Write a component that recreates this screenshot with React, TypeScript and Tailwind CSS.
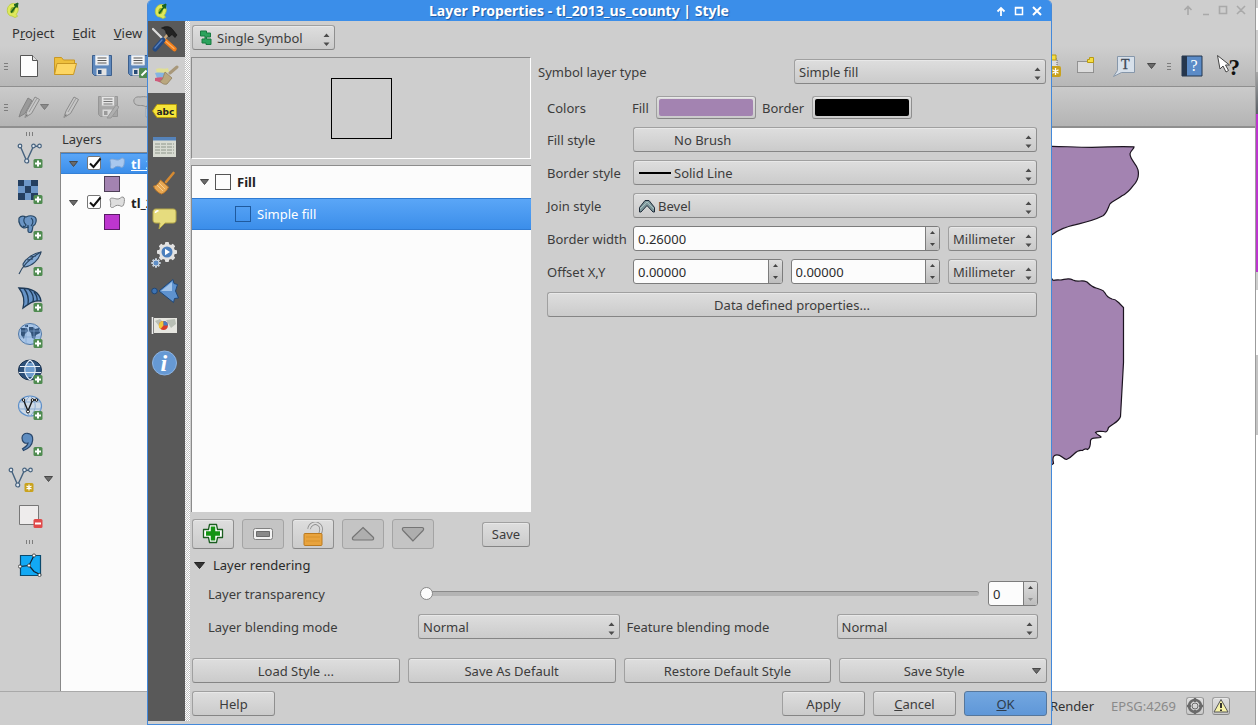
import React, { useState } from 'react';

const BTN =
  'rounded-[3px] border border-[#a0a0a0] border-b-[#858585] border-r-[#8f8f8f] bg-linear-to-b from-[#dedede] to-[#cbcbcb] shadow-[inset_0_1px_0_#e8e8e8] text-[#3c3c3c]';

/* ---------- small shared pieces ---------- */

const Down: React.FC<{ className?: string }> = ({ className = 'w-[9px] h-[6px]' }) => (
  <svg viewBox="0 0 9 6" className={`shrink-0 ${className}`}>
    <path d="M.5.5h8L4.5 5.5z" fill="#6a6a6a" stroke="#484848" />
  </svg>
);

const Grip: React.FC<{ vertical?: boolean }> = ({ vertical }) => (
  <svg viewBox="0 0 8 8" className={`w-2 h-2 shrink-0 ${vertical ? 'rotate-90' : ''}`}>
    <path d="M2 1.5h4M2 4.5h4M2 7.5h4" stroke="#7d7d7d" />
  </svg>
);

interface ComboProps {
  label: string;
  value: string;
  options?: string[];
  className?: string;
  pad?: string;
  icon?: React.ReactNode;
}

const Combo: React.FC<ComboProps> = ({ label, value, options = [], className = '', pad = 'pl-1', icon }) => (
  <div className={`relative ${className}`}>
    <select aria-label={label} defaultValue={value} className={`${BTN} appearance-none block w-full h-[25px] pr-5 outline-none ${pad}`}>
      {[value, ...options].map(o => <option key={o}>{o}</option>)}
    </select>
    {icon && <span className="absolute left-[6px] inset-y-0 flex items-center pointer-events-none">{icon}</span>}
    <svg viewBox="0 0 7 13" className="absolute right-[5px] top-[8px] w-[7px] h-[13px] pointer-events-none">
      <path d="M.5 4 3.5.5 6.5 4zM.5 9.5 3.5 13 6.5 9.5z" fill="#4c4c4c" />
    </svg>
  </div>
);

interface SpinProps {
  label: string;
  value: string;
  onChange: (v: string) => void;
  step: number;
  digits: number;
  className?: string;
}

const Spin: React.FC<SpinProps> = ({ label, value, onChange, step, digits, className = '' }) => {
  const bump = (d: number) => onChange(Math.max(0, Number(value) + d).toFixed(digits));
  return (
    <div className={`flex h-[25px] rounded-[3px] border border-[#7c7c7c] bg-[#fcfcfc] overflow-hidden ${className}`}>
      <input
        type="text"
        aria-label={label}
        value={value}
        onChange={e => onChange(e.target.value)}
        className="flex-1 min-w-0 pl-1 bg-transparent text-[#2c2c2c] outline-none"
      />
      <div className="w-[14px] shrink-0 flex flex-col border-l border-[#7c7c7c] bg-linear-to-b from-[#dedede] to-[#bdbdbd]">
        <button aria-label={`${label} up`} onClick={() => bump(step)} className="flex-1 flex items-center justify-center">
          <svg viewBox="0 0 5 3" className="w-[5px] h-[3px]"><path d="M0 3 2.5 0 5 3z" fill="#444" /></svg>
        </button>
        <button
          aria-label={`${label} down`}
          onClick={() => bump(-step)}
          disabled={digits === 0 && value === '0'}
          className="flex-1 flex items-center justify-center disabled:opacity-40"
        >
          <svg viewBox="0 0 5 3" className="w-[5px] h-[3px]"><path d="M0 0 2.5 3 5 0z" fill="#444" /></svg>
        </button>
      </div>
    </div>
  );
};

const Logo = () => (
  <svg viewBox="0 0 14 16" className="w-[14px] h-4 shrink-0">
    <path d="M7.5 1.5C4 1.5 1.3 4.500 1.300 8.500c0 3.500 2 5.500 4.700 5.500l3 1.500 2.500-1.200-1.300-2c1.800-2 2.600-5 1.700-7.500C11.200 2.700 9.700 1.500 7.500 1.500z" fill="#dfe95c" stroke="#b5c93a" strokeWidth=".8" />
    <path d="M6.500 5C5 5.500 4.200 7 4.300 9.300c.1 1.500 1 2.200 1.900 2C8 11 9 9 8.900 6.800 8.700 5.200 7.800 4.700 6.500 5z" fill="#8fb02a" />
    <path d="M5 10.500 10 4" stroke="#17621f" strokeWidth="1.600" />
    <path d="M8 2.800 12 1 11.300 5.500z" fill="#17621f" stroke="#17621f" />
  </svg>
);

const PlusBadge = () => (
  <g>
    <rect x="16.500" y="17" width="9" height="9" rx="1.500" fill="#4f8b50" />
    <path d="M21 18.500v6M18 21.500h6" stroke="#fff" strokeWidth="2" />
  </g>
);

const vee = (c: string) => (
  <g fill="none" stroke={c} strokeWidth="1.400">
    <path d="M3.300 4.300 9.700 19 16.500 4.300h6.200" />
    <g fill="#dfe6ee" strokeWidth="1.200">
      <circle cx="3" cy="4" r="1.800" /><circle cx="9.700" cy="19" r="2" />
      <circle cx="16.500" cy="4" r="1.800" /><circle cx="22.500" cy="4" r="1.800" />
    </g>
  </g>
);

/* ---------- main window icons ---------- */

const DATA_ICONS: { name: string; art: React.ReactNode }[] = [
  { name: 'Add vector layer', art: vee('#46627e') },
  {
    name: 'Add raster layer',
    art: (
      <g>
        <rect x="1" y="2" width="20" height="20" fill="#6d97c8" />
        <path d="M1 2h6v6H1zM14 2h7v6h-7zM8 8h6v7H8zM1 15h7v7H1zM14 15h7v7h-7z" fill="#243f60" />
      </g>
    ),
  },
  {
    name: 'Add PostGIS layer',
    art: (
      <g fill="#6b95c4" stroke="#274766" strokeWidth="1.200">
        <path d="M2 4C4 1.500 7 2 9 3c3-1.500 6-1.500 8-.5 2 .8 2.500 3 2 5.500-.4 2-1.500 3.500-3 4l-1 5c-.5 2-4 2-4 0v-4l-3 1C4 14 1 9 2 4z" />
        <path d="M8 3C6 6 7 9 9 11c-1 2-2 2-3 1M14 4c3 2 2 6 0 8M11 11v3" fill="none" />
      </g>
    ),
  },
  {
    name: 'Add SpatiaLite layer',
    art: (
      <g stroke="#2c4763" strokeWidth="1.100" fill="#86acd6">
        <path d="M24 2C17 3 9 8 6 14c0 2 1 3 2 3 7-1 14-7 16-15z" />
        <path d="M24 2C15 7 7 13 2 24M10 10l6-1M13 7l6-1" fill="none" />
      </g>
    ),
  },
  {
    name: 'Add MSSQL layer',
    art: (
      <g stroke="#1e3a58" strokeWidth="1.300" fill="#6693c6">
        <path d="M2 2c8 0 20 1 22 13-7-1-11 2-18 7C8 14 6 7 2 2z" />
        <path d="M7 2.500c4 5 5 10 4 16M12 3.500c4 4 5 8 4 12.500M17 6c2.500 3 3.500 6 3 9" fill="none" />
      </g>
    ),
  },
  {
    name: 'Add WMS layer',
    art: (
      <g>
        <ellipse cx="13" cy="12" rx="11.500" ry="10.500" fill="#a9c6e8" stroke="#4f77a5" />
        <path d="M4 6h6l1 3-3 3-1 5-3-4zM12 5h4l2 2 4-1 1 5-4 2-1 4-3-1-1-5-2-2zM8 3h3v2H8z" fill="#33547a" />
        <path d="M2 9h22M2 15h22M9 2v20M17 2v20" stroke="#7fa5d0" strokeWidth=".7" />
      </g>
    ),
  },
  {
    name: 'Add WCS layer',
    art: (
      <g>
        <ellipse cx="13" cy="12" rx="11.500" ry="10" fill="#2d5079" stroke="#172f4c" />
        <path d="M9 5h8v3H9zM8 9h10v5H8zM9 15h8v4H9z" fill="#6e9ccd" />
        <path d="M3 8.500h20M2 14.500h22M13 2c-7 6-7 14 0 20M13 2c7 6 7 14 0 20" fill="none" stroke="#e6eef7" strokeWidth="1.100" />
      </g>
    ),
  },
  {
    name: 'Add WFS layer',
    art: (
      <g>
        <ellipse cx="13" cy="12" rx="11.500" ry="10" fill="#cfdae6" stroke="#5d8fc9" strokeWidth="1.200" />
        <path d="M3 8h20M2 15h22M13 2c-7 6-7 14 0 20M13 2c7 6 7 14 0 20" fill="none" stroke="#8badd4" />
        <path d="M6.500 6 11 17l4.500-11H20" fill="none" stroke="#1b1b1b" strokeWidth="1.400" />
        <g fill="#fff" stroke="#111"><circle cx="6.500" cy="6" r="1.300" /><circle cx="11" cy="17.500" r="1.500" /><circle cx="15.500" cy="6" r="1.300" /><circle cx="19.500" cy="6" r="1.300" /></g>
      </g>
    ),
  },
  {
    name: 'Add delimited text layer',
    art: <path d="M5 8c0-3 2.500-5 5.500-4.700C14 3.600 16 6 15.700 10c-.4 5-4 8.500-9.200 10.500l-1-1.700c3-1.700 5-3.500 5.500-5.800C7.500 14 5 11.500 5 8z" fill="#5f8dc0" stroke="#29466a" strokeWidth="1.200" />,
  },
];

const Floppy: React.FC<{ gray?: boolean; children?: React.ReactNode }> = ({ gray, children }) => (
  <svg viewBox="0 0 22 24" className="w-[22px] h-6 shrink-0">
    <path d="M1.500 1.500h19v20h-17l-2-2z" fill={gray ? '#9d9d9d' : '#5f89bd'} stroke={gray ? '#858585' : '#3c5f8d'} />
    <path d="M4.500 1.500h13v9.500h-13z" fill="#f4f4f4" stroke={gray ? '#aaa' : '#c9d6e6'} />
    <path d="M6.500 4h9M6.500 6.500h9M6.500 9h9" stroke="#555" />
    <path d="M5.500 14.500h10v7h-10z" fill="#e3e3e3" />
    <path d="M7 16h3.500v4H7z" fill={gray ? '#8c8c8c' : '#294c78'} />
    {children}
  </svg>
);

const Pencil: React.FC<{ className?: string; children?: React.ReactNode }> = ({ className = 'w-[18px]', children }) => (
  <svg viewBox="0 0 18 24" className={`h-6 shrink-0 overflow-visible ${className}`}>
    {children}
    <path d="M2 22.500 4 16 12 2l4.500 2.500L8.500 18.500z" fill="#c6c6c6" stroke="#8a8a8a" />
    <path d="M2 22.500 2.800 19l2.500 1.400zM6 17 14 3.300" fill="#777" stroke="#9a9a9a" />
  </svg>
);

const Cloud: React.FC<{ sel?: boolean }> = ({ sel }) => (
  <svg viewBox="0 0 16 13" className="w-4 h-[13px] shrink-0 ml-px">
    <path d="M1 3.500C1.500 1 5 2.500 8 3s4-2.500 6-2 1.500 4 1 6.500-2 3.500-3.500 2.500S7 9 5.500 10.500 1 12 1.500 9.500 1.500 6 1 3.500z" fill={sel ? '#a9c8ee' : '#dedede'} stroke={sel ? '#7fa5d4' : '#8e8e8e'} />
  </svg>
);

/* ---------- dialog side tabs ---------- */

const gearTeeth = Array.from({ length: 8 }, (_, i) => i * 45);

const TABS: { name: string; art: React.ReactNode }[] = [
  {
    name: 'General',
    art: (
      <g strokeLinecap="round">
        <path d="M2 4 16 18" stroke="#dcdcdc" strokeWidth="2.200" />
        <path d="M14.500 16l9 8" stroke="#f07d1a" strokeWidth="4.500" />
        <path d="M15 16.500l8 7" stroke="#ffb061" strokeWidth="1.200" />
        <path d="M17 9 13 14" stroke="#c9a77c" strokeWidth="2.500" />
        <path d="M12 15 4 24" stroke="#244a83" strokeWidth="5" />
        <path d="M11 15 4 23" stroke="#557fbc" strokeWidth="1.300" />
        <path d="M11 3c4-2.500 9-1.500 11 2l4 5-2 2.500-3-3-3 2.500-3-4c0-3-2-4-4-5z" fill="#232323" stroke="#111" strokeWidth=".6" />
      </g>
    ),
  },
  {
    name: 'Style',
    art: (
      <g>
        <path d="M5 8c4-2 8 1 12-1l1 4-12 2z" fill="#e0df94" />
        <path d="M4 12c5-1 8 0 12 0l-1 4-9 1z" fill="#86b4e2" />
        <path d="M4 17c4-1 8-1 12 0l-2 5c-4 1-7-2-10-2z" fill="#cf5b7b" />
        <path d="M26 6 19 12" stroke="#a8987a" strokeWidth="3" strokeLinecap="round" />
        <path d="M14 11l7 6-5 6c-3 1-6-1-7-3 3-1 3-4 5-9z" fill="#b9a77e" stroke="#8f8060" strokeWidth=".8" />
      </g>
    ),
  },
  {
    name: 'Labels',
    art: (
      <g>
        <path d="M1.500 14 6 7.500h19.500v13H6z" fill="#f6e53a" stroke="#b69b10" />
        <text x="5.500" y="17.500" fontFamily="'DejaVu Sans', sans-serif" fontWeight="bold" fontSize="9" fill="#222">abc</text>
      </g>
    ),
  },
  {
    name: 'Fields',
    art: (
      <g>
        <rect x="2" y="4" width="23" height="20" fill="#d8dbd2" />
        <path d="M2 4h23v3.500H2z" fill="#5583ba" />
        <path d="M4 11h19M4 14h19M4 17h19M4 20h19" stroke="#8e968a" strokeDasharray="5 1" />
      </g>
    ),
  },
  {
    name: 'Rendering',
    art: (
      <g>
        <path d="M22.500 4 15 13" stroke="#d58a32" strokeWidth="2.600" strokeLinecap="round" />
        <path d="M9.500 11l8 7c-1 3-4 6-7 7-3-1-7-4-8-8 3 0 5-3 7-6z" fill="#e8a853" stroke="#b9762a" />
        <path d="M6 16l6 6M8 14l6 6" stroke="#f6cf93" />
      </g>
    ),
  },
  {
    name: 'Display',
    art: (
      <g>
        <path d="M5 4h17c2 0 3 1 3 3v8c0 2-1 3-3 3h-8l-6 6 1-6H5c-2 0-3-1-3-3V7c0-2 1-3 3-3z" fill="#e6dc7e" stroke="#b5a848" />
        <path d="M4.500 8c0-2 1-2 3-2.200" fill="none" stroke="#fff" strokeWidth="1.500" />
      </g>
    ),
  },
  {
    name: 'Actions',
    art: (
      <g>
        {gearTeeth.map(a => (
          <rect key={a} x="14" y="1" width="4" height="5" rx="1" fill="#e2e2e2" transform={`rotate(${a} 16 11)`} />
        ))}
        <circle cx="16" cy="11" r="8" fill="#e2e2e2" />
        <circle cx="16" cy="11" r="5.500" fill="#4b7fbd" />
        <path d="M14 7.800v6.400l5-3.200z" fill="#fff" />
        {gearTeeth.map(a => (
          <rect key={a} x="4" y="17.300" width="2" height="3" fill="#c9d4e0" transform={`rotate(${a} 5 22)`} />
        ))}
        <circle cx="5" cy="22" r="3" fill="#5f8fc8" stroke="#d0d8e0" />
      </g>
    ),
  },
  {
    name: 'Joins',
    art: (
      <g>
        <path d="M8 14 22 2.500l1 4 3.500 1-2 6.500 3 7-4 .5-1 4z" fill="#5e92cf" stroke="#1f4778" />
        <path d="M10 14 21 5v9z" fill="#a2c4ea" />
        <circle cx="3.500" cy="14" r="2.800" fill="#3d73b4" stroke="#1f4778" />
      </g>
    ),
  },
  {
    name: 'Diagrams',
    art: (
      <g>
        <path d="M1.500 4v17" stroke="#ededed" strokeWidth="1.600" />
        <rect x="3" y="5" width="23" height="15" fill="#e6e6e0" />
        <path d="M4 8l5-2 3 3-4 4zM15 7l9-1 1 5-5 4z" fill="#b9bfb5" />
        <circle cx="12.500" cy="12.500" r="4.500" fill="#d93d2a" />
        <path d="M12.500 12.500V8a4.500 4.500 0 0 0-3 8z" fill="#f0c63a" />
        <path d="M12.500 12.500V8a4.500 4.500 0 0 1 4.500 4.500z" fill="#4a7dc0" />
      </g>
    ),
  },
  {
    name: 'Metadata',
    art: (
      <g>
        <circle cx="13.500" cy="14" r="12" fill="#6699d4" stroke="#8eb4e2" />
        <text x="9.500" y="22" fontFamily="'Liberation Serif', serif" fontStyle="italic" fontWeight="bold" fontSize="24" fill="#fff">i</text>
      </g>
    ),
  },
];

/* ---------- main window ---------- */

const MapCanvas = () => (
  <svg viewBox="1035 128 220 563" className="w-[220px] h-[563px] shrink-0">
    <g fill="#a383b1" stroke="#1c1420" strokeWidth="1.200">
      <path d="M1030 146l22 .3c14 .3 26 1 40 1 14-.5 28-.7 42-.5.5 2-3 3-4 7 0 6 6 9 8 16 1.500 7-1 12-5 16-3 4-7 8-11 10-5 4-9 5-12 8-2 4-3 9-7 12-6 3-15 6-24 8-10 2-20 5-27 11l-22 10z" />
      <path d="M1030 281l22-2c1 3 3 0 8 1 4 0 8-3 13 0 6 3 8-1 14 2 3 3 5 5 9 6 5 2 7 1 9 5 2 4 4 5 7 6 4 0 5 2 8 5l3.500 3.500v55c-1 18-2 36-3 54-2 6-8 7-12 11-1 4-2 5-5 4-4 0-6-1-8 1 2 3 7 4 5 5-4 1-9-1-10 3 0 4 0 8-3 9-2-2-3 0-5 1-5-1-7 2-9 4-3 3-4 4-7 5-4-1-7-7-12-4-3 2-1 6-1 8l-3 2-22-4z" />
    </g>
  </svg>
);

const LayerRow: React.FC<{ sel?: boolean }> = ({ sel }) => (
  <label
    className={`flex items-center pl-2 gap-[6px] font-bold ${sel ? 'h-[21px] bg-linear-to-b from-[#5aa6f7] to-[#3b8eea] border-t border-b border-[#3581d6] text-white' : 'h-[19px] text-[#222]'}`}
  >
    <Down />
    <span className="relative ml-[3px] w-[15px] h-[15px] shrink-0">
      <input type="checkbox" defaultChecked className="peer appearance-none block w-[14px] h-[14px] rounded-[2px] border border-[#777] bg-white" />
      <svg viewBox="0 0 15 15" className="absolute inset-0 hidden peer-checked:block pointer-events-none">
        <path d="M3 7.500 6.500 11 13.500 2.500" fill="none" stroke="#111" strokeWidth="2" />
      </svg>
    </span>
    <Cloud sel={sel} />
    <span className={`truncate ${sel ? 'underline' : ''}`}>tl_2013_us_county</span>
  </label>
);

const MainWindow = () => (
  <div className="flex-1 min-w-0 flex flex-col bg-[#cecece]">
    <header className="h-[22px] flex items-center justify-between pl-[6px] pr-2 pb-[2px]">
      <Logo />
      <svg viewBox="0 0 64 12" className="w-16 h-3" fill="none" stroke="#a9a9a9" strokeWidth="1.600">
        <path d="M5 11V3M1.500 6 5 2.500 8.500 6M20 10.500h6M36.500 2.500h7v7h-7zM54 2l8 8M62 2l-8 8" />
      </svg>
    </header>
    <nav className="h-6 flex items-center gap-[18px] pl-3 pb-[2px] text-[13px] text-[#333]">
      <button>P<u>r</u>oject</button>
      <button><u>E</u>dit</button>
      <button><u>V</u>iew</button>
    </nav>

    <div className="h-[41px] flex items-center justify-between border-b border-[#8f8f8f] bg-linear-to-b from-[#cecece] to-[#b7b7b7]">
      <div className="flex items-center gap-[14px] pl-[2px]">
        <Grip />
        <svg viewBox="0 0 20 24" className="w-5 h-6 -ml-[5px]">
          <path d="M1.500 1.500h12l5 5v16h-17z" fill="#fdfdfd" stroke="#555" />
          <path d="M13.500 1.500v5h5" fill="#ddd" stroke="#555" />
        </svg>
        <svg viewBox="0 0 24 24" className="w-6 h-6">
          <path d="M1.500 20.500v-17h7l2 2.500h11v4" fill="#eebf3c" stroke="#c89724" />
          <path d="M1.500 20.500 4 9.500h19.500l-3 11z" fill="#fdd663" stroke="#c89724" />
        </svg>
        <Floppy />
        <Floppy>
          <rect x="12" y="14" width="10" height="10" rx="1" fill="#4f8b50" />
          <path d="M14.500 21.500l5-5" stroke="#fff" strokeWidth="2" />
        </Floppy>
      </div>
      <div className="flex items-center pr-[14px]">
        <svg viewBox="0 0 24 24" className="w-6 h-6">
          <path d="M1 5h17v12H1z" fill="#dcdcdc" stroke="#666" strokeDasharray="1 1" />
          <path d="M11 1h6v5h-6z" fill="#f5dd43" stroke="#b89a12" />
          <rect x="11" y="12" width="11" height="11" rx="2" fill="#c9a21d" />
          <path d="M16.500 14v7M13.500 15.700l6 3.600M19.500 15.700l-6 3.600" stroke="#fff" strokeWidth="1.300" />
        </svg>
        <svg viewBox="0 0 20 18" className="w-5 h-[18px] ml-[13px]">
          <path d="M1.500 4.500h16v11h-16z" fill="#dcdcdc" stroke="#555" strokeDasharray="1 1" />
          <path d="M11.500 5.500v-3h2v-2h4v5z" fill="#f5dd43" stroke="#b89a12" />
        </svg>
        <svg viewBox="0 0 24 22" className="w-6 h-[22px] ml-[16px]">
          <path d="M5.500 1.500h17v16h-13l-8 4 4-6z" fill="#d7e0ea" stroke="#8697aa" />
          <text x="9" y="14" fontFamily="'Liberation Serif', serif" fontSize="14" fill="#3c4652" stroke="#3c4652" strokeWidth=".3">T</text>
        </svg>
        <Down className="w-[9px] h-[6px] ml-[11px]" />
        <span className="ml-[9px] flex"><Grip /></span>
        <svg viewBox="0 0 22 22" className="w-[22px] h-[22px] ml-2">
          <path d="M1 1h20v20H1z" fill="#5b8bc7" stroke="#24364f" />
          <path d="M1 1h5v20H1z" fill="#26374e" />
          <text x="9.500" y="16" fontFamily="'Liberation Serif', serif" fontSize="16" fill="#fff">?</text>
        </svg>
        <svg viewBox="0 0 26 26" className="w-[26px] h-[26px] ml-3">
          <path d="M2.500 2.500 5 16l3-3 3 6 2.500-1.500L10.500 12h4z" fill="#fff" stroke="#444" />
          <text x="13.500" y="22" fontFamily="'Liberation Serif', serif" fontSize="23" fontWeight="bold" fill="#111">?</text>
        </svg>
      </div>
    </div>

    <div className="h-[41px] flex items-center gap-[13px] pl-[2px] border-b-2 border-[#8f8f8f] bg-linear-to-b from-[#cbcbcb] to-[#b4b4b4]">
      <Grip />
      <Pencil className="w-[18px]">
        <path d="M-4 22-2 16 5 3l4 2.500L2 18.500z" fill="#9a9a9a" stroke="#848484" />
      </Pencil>
      <span className="-ml-[14px] flex opacity-60"><Down /></span>
      <Pencil />
      <span className="ml-1 flex opacity-70">
        <Floppy gray><path d="M10 23l9-13 3 2-8 11z" fill="#aaa" stroke="#888" /></Floppy>
      </span>
      <svg viewBox="0 0 24 24" className="w-6 h-6 shrink-0 opacity-70">
        <path d="M3 9c-3-4 0-8 5-7 5-1 10 0 12 3l-6 7c-4-3-7 0-11-3z" fill="#bdbdbd" stroke="#777" />
        <path d="M14 13h8v9h-8z" fill="#dde3ea" stroke="#8896a6" />
      </svg>
    </div>

    <div className="flex-1 flex min-h-0">
      <div className="w-[60px] shrink-0 flex flex-col items-center">
        <span className="h-[9px] flex items-center pt-[2px]"><Grip vertical /></span>
        {DATA_ICONS.map(i => (
          <button key={i.name} aria-label={i.name} className="h-9 flex items-center">
            <svg viewBox="0 0 26 26" className="w-[26px] h-[26px]">{i.art}<PlusBadge /></svg>
          </button>
        ))}
        <button aria-label="New shapefile layer" className="h-9 flex items-center gap-[10px]">
          <svg viewBox="0 0 26 26" className="w-[26px] h-[26px]">
            {vee('#46627e')}
            <rect x="16.500" y="17" width="9" height="9" rx="1.500" fill="#c9a21d" />
            <path d="M21 18.500v6M18.500 20l5 3M23.500 20l-5 3" stroke="#fff" strokeWidth="1.200" />
          </svg>
          <Down />
        </button>
        <button aria-label="Remove layer" className="h-9 flex items-center">
          <svg viewBox="0 0 26 26" className="w-[26px] h-[26px]">
            <path d="M2.500 3.500h19v19h-19z" fill="#eeecec" stroke="#777" />
            <rect x="16.500" y="17" width="9" height="9" rx="1.500" fill="#e04a4a" />
            <path d="M18 21.500h6" stroke="#fff" strokeWidth="2" />
          </svg>
        </button>
        <span className="h-[18px] flex items-center"><Grip vertical /></span>
        <button aria-label="Topology checker" className="h-7 flex items-center">
          <svg viewBox="0 0 24 24" className="w-6 h-6">
            <path d="M2.500 2.500h20v20h-20z" fill="#12a9f5" stroke="#0b4a6d" strokeWidth="1.200" />
            <path d="M2 13.500l9-1 5-10M11 12.500l5 6 6 3" fill="none" stroke="#123" strokeWidth="1.200" />
            <g fill="#fff" stroke="#333" strokeWidth=".8"><circle cx="2" cy="13.500" r="1.600" /><circle cx="11" cy="12.500" r="1.600" /><circle cx="16" cy="2.500" r="1.600" /><circle cx="21.500" cy="22" r="1.600" /></g>
          </svg>
        </button>
      </div>
      <aside className="w-[240px] shrink-0 flex flex-col text-[13px]">
        <h2 className="h-6 flex items-center pl-[2px] pb-[2px] text-[#333]">Layers</h2>
        <div className="flex-1 border-l border-t border-[#888] bg-[#fcfcfc]">
          <LayerRow sel />
          <div className="h-[19px] flex items-center pl-[43px]"><span className="w-4 h-4 border border-[#4e3f57] bg-[#a383b1]" /></div>
          <LayerRow />
          <div className="h-[19px] flex items-center pl-[43px]"><span className="w-4 h-4 border border-[#5a1b66] bg-[#bd36cf]" /></div>
        </div>
      </aside>
      <main className="flex-1 min-w-0 bg-white flex justify-end overflow-hidden">
        <MapCanvas />
      </main>
    </div>

    <footer className="h-[34px] shrink-0 flex items-center justify-end pr-[25px] pb-[6px] border-t border-[#a9a9a9] text-[13px]">
      <span className="text-[#333]">Render</span>
      <span className="ml-[17px] text-[#8a8a8a]">EPSG:4269</span>
      <button aria-label="CRS status" className={`${BTN} w-[18px] h-[18px] ml-[10px]`}>
        <svg viewBox="0 0 16 16" className="w-4 h-4" fill="none" stroke="#6a6a6a">
          <circle cx="8" cy="8" r="6" strokeWidth="2.500" /><circle cx="8" cy="8" r="3" /><path d="M8 0v4M8 12v4M0 8h4M12 8h4" strokeWidth="2.500" />
        </svg>
      </button>
      <button aria-label="Messages" className={`${BTN} w-[18px] h-[18px] ml-2`}>
        <svg viewBox="0 0 16 16" className="w-4 h-4">
          <path d="M8 1.500 15 14H1z" fill="#f7f3a8" stroke="#555" /><path d="M8 5v5M8 11.500v1.500" stroke="#222" strokeWidth="1.800" />
        </svg>
      </button>
    </footer>
  </div>
);

/* sliver of the window behind everything */
const BackWindow = () => (
  <div className="w-[3px] shrink-0 flex flex-col border-l border-[#9c9c9c] bg-white">
    <div className="h-2 bg-[#cecece]" />
    <div className="h-[22px]" />
    <div className="h-[42px] bg-[#cecece]" />
    <div className="h-[42px] bg-linear-to-b from-[#a8a8a8] to-[#5a5f66]" />
    <div className="h-[158px] bg-[#bd36cf]" />
    <div className="h-[18px] bg-[#cecece]" />
    <div className="h-[65px]" />
    <div className="h-[80px] bg-[#c4c4c4]" />
  </div>
);

/* ---------- dialog ---------- */

const TOOLS: { name: string; off?: boolean; art: React.ReactNode }[] = [
  {
    name: 'Add symbol layer',
    art: (
      <g>
        <path d="M8.500 2.500h7l1 5h5v8h-5l-1 5h-7l-1-5h-5v-8h5z" fill="#fff" stroke="#1b5e20" strokeWidth="1.300" strokeLinejoin="round" />
        <path d="M12 4.500v14M5 11.500h14" stroke="#149414" strokeWidth="4.500" />
      </g>
    ),
  },
  {
    name: 'Remove symbol layer',
    off: true,
    art: <g><rect x="2.500" y="6.500" width="19" height="11" rx="2" fill="#f2f2f2" stroke="#808080" /><path d="M5.500 9.500h13v5h-13z" fill="#8a8a8a" stroke="#6c6c6c" /></g>,
  },
  {
    name: 'Lock color',
    art: (
      <g>
        <path d="M8 7C9 2 14 0 17 2c3 1.500 4 5 2 10" fill="none" stroke="#8d8d8d" strokeWidth="3.500" />
        <path d="M8 7C9 2 14 0 17 2c3 1.500 4 5 2 10" fill="none" stroke="#dcdcdc" strokeWidth="1.800" />
        <rect x="3" y="11.500" width="18" height="12" rx="1" fill="#e8a33d" stroke="#bb7a1f" />
        <path d="M5 15h14M5 19h14" stroke="#d8922c" />
      </g>
    ),
  },
  { name: 'Move up', off: true, art: <path d="M12 5.500 22 15c1.300 1.500.5 3-1 3H3c-1.500 0-2.300-1.500-1-3z" fill="#aeaeae" stroke="#757575" strokeWidth="1.200" /> },
  { name: 'Move down', off: true, art: <path d="M12 19 2 8.500C.7 7 1.500 5.500 3 5.500h18c1.500 0 2.300 1.500 1 3z" fill="#aeaeae" stroke="#757575" strokeWidth="1.200" /> },
];

const SymbolTree = () => (
  <div className="flex-1 mt-[6px] border-t border-l border-[#8c8c8c] bg-[#fcfcfc]">
    <div className="h-8 flex items-center pl-2 font-bold text-[#222]">
      <Down />
      <span className="w-4 h-4 ml-[6px] mr-[6px] border border-[#555]" />
      Fill
    </div>
    <div className="h-8 flex items-center pl-[43px] border-y border-[#2f7bd3] bg-linear-to-b from-[#5aa6f7] to-[#3b8eea] text-white">
      <span className="w-4 h-4 mr-[6px] border border-[#1f5a9e]" />
      Simple fill
    </div>
  </div>
);

const LABEL = 'w-[86px] shrink-0';

const SymbolForm = () => {
  const [width, setWidth] = useState('0.26000');
  const [x, setX] = useState('0.00000');
  const [y, setY] = useState('0.00000');

  return (
    <section className="flex-1 min-w-0 pt-[38px] pl-[7px] pr-[5px]">
      <div className="flex items-center">
        <span className="flex-1">Symbol layer type</span>
        <Combo label="Symbol layer type" value="Simple fill" className="w-[252px]" />
      </div>
      <div className="px-[9px] mt-3 flex flex-col gap-2">
        <div className="flex items-center h-[23px]">
          <span className="w-[85px]">Colors</span>
          <span className="w-6">Fill</span>
          <button aria-label="Fill color" className={`${BTN} w-[100px] h-[23px] p-[2px]`}><span className="block h-full rounded-[2px] bg-[#a383b1]" /></button>
          <span className="w-[50px] ml-[6px]">Border</span>
          <button aria-label="Border color" className={`${BTN} w-[100px] h-[23px] p-[2px]`}><span className="block h-full rounded-[2px] bg-black" /></button>
        </div>
        <div className="flex items-center">
          <span className={LABEL}>Fill style</span>
          <Combo label="Fill style" value="No Brush" options={['Solid']} pad="pl-10" className="flex-1" />
        </div>
        <div className="flex items-center">
          <span className={LABEL}>Border style</span>
          <Combo label="Border style" value="Solid Line" options={['Dash Line']} pad="pl-10" className="flex-1" icon={<span className="w-8 h-[2px] bg-black" />} />
        </div>
        <div className="flex items-center">
          <span className={LABEL}>Join style</span>
          <Combo
            label="Join style"
            value="Bevel"
            options={['Miter', 'Round']}
            pad="pl-6"
            className="flex-1"
            icon={
              <svg viewBox="0 0 16 14" className="w-4 h-[14px]">
                <path d="M.5 8.500 6 1.500h4l5.500 7V13H14L8 6.500 2 13H.5z" fill="#7e989c" stroke="#1e2a38" />
                <path d="M1 10 8 3l7 7" fill="none" stroke="#a9bfc0" />
              </svg>
            }
          />
        </div>
        <div className="flex items-center">
          <span className={LABEL}>Border width</span>
          <Spin label="Border width" value={width} onChange={setWidth} step={0.2} digits={5} className="flex-1 mr-2" />
          <Combo label="Border width unit" value="Millimeter" options={['Map unit']} className="w-[89px]" />
        </div>
        <div className="flex items-center">
          <span className={LABEL}>Offset X,Y</span>
          <Spin label="Offset X" value={x} onChange={setX} step={0.2} digits={5} className="flex-1 mr-2" />
          <Spin label="Offset Y" value={y} onChange={setY} step={0.2} digits={5} className="flex-1 mr-2" />
          <Combo label="Offset unit" value="Millimeter" options={['Map unit']} className="w-[89px]" />
        </div>
        <button className={`${BTN} h-[25px]`}>Data defined properties...</button>
      </div>
    </section>
  );
};

const LayerRendering = () => {
  const [transparency, setTransparency] = useState('0');

  return (
    <section className="pl-[3px] pr-[13px]">
      <h3 className="h-8 flex items-center gap-2 text-[#2a2a2a]">
        <svg viewBox="0 0 11 7" className="w-[11px] h-[7px]"><path d="M.5.5h10l-5 6z" fill="#333" stroke="#222" /></svg>
        Layer rendering
      </h3>
      <div className="flex items-center pl-[14px]">
        <label htmlFor="transparency" className="w-[210px] shrink-0">Layer transparency</label>
        <input
          id="transparency"
          type="range"
          min={0}
          max={100}
          value={Number(transparency)}
          onChange={e => setTransparency(e.target.value)}
          className="flex-1 min-w-0 mx-[2px] h-[13px] appearance-none bg-transparent [&::-webkit-slider-runnable-track]:h-[5px] [&::-webkit-slider-runnable-track]:rounded-full [&::-webkit-slider-runnable-track]:bg-[#b4b4b4] [&::-webkit-slider-runnable-track]:border-t [&::-webkit-slider-runnable-track]:border-[#8a8a8a] [&::-webkit-slider-thumb]:appearance-none [&::-webkit-slider-thumb]:-mt-[5px] [&::-webkit-slider-thumb]:w-[13px] [&::-webkit-slider-thumb]:h-[13px] [&::-webkit-slider-thumb]:rounded-full [&::-webkit-slider-thumb]:border [&::-webkit-slider-thumb]:border-[#888] [&::-webkit-slider-thumb]:bg-[#fcfcfc]"
        />
        <Spin label="Transparency value" value={transparency} onChange={setTransparency} step={1} digits={0} className="w-[50px] ml-[7px]" />
      </div>
      <div className="flex items-center pl-[14px] mt-2">
        <span className="w-[210px] shrink-0">Layer blending mode</span>
        <Combo label="Layer blending mode" value="Normal" options={['Multiply']} className="flex-1" />
        <span className="w-[210px] shrink-0 ml-[7px]">Feature blending mode</span>
        <Combo label="Feature blending mode" value="Normal" options={['Multiply']} className="flex-1" />
      </div>
    </section>
  );
};

const Dialog = () => (
  <div className="absolute left-[147px] right-[206px] inset-y-0 flex flex-col rounded-t-[5px] overflow-hidden bg-[#cecece] border-x border-b border-[#4489da] text-[13px] text-[#3c3c3c]">
    <header className="h-[21px] shrink-0 flex items-center bg-[#3b8ee9] text-white">
      <div className="w-5 pl-[6px]"><Logo /></div>
      <h1 className="flex-1 text-center text-[14px] font-bold [text-shadow:1px_1px_1px_#1d5aa5]">Layer Properties - tl_2013_us_county | Style</h1>
      <div className="w-[61px] flex items-center gap-2 pl-[6px]">
        <button aria-label="Keep above">
          <svg viewBox="0 0 10 10" className="w-[10px] h-[10px]" fill="none" stroke="#fff" strokeWidth="1.800"><path d="M5 10V2M1.500 5.500 5 2l3.500 3.500" /></svg>
        </button>
        <button aria-label="Maximize">
          <svg viewBox="0 0 10 10" className="w-[10px] h-[10px]" fill="none" stroke="#fff" strokeWidth="1.500"><path d="M1.500 1.500h7v7h-7zM1 2h8" /></svg>
        </button>
        <button aria-label="Close">
          <svg viewBox="0 0 10 10" className="w-[10px] h-[10px]" fill="none" stroke="#fff" strokeWidth="2"><path d="M1 1l8 8M9 1l-8 8" /></svg>
        </button>
      </div>
    </header>

    <div className="flex-1 flex min-h-0 pb-[3px]">
      <nav className="w-[37px] shrink-0 bg-[#595959]">
        {TABS.map(t => (
          <button key={t.name} aria-label={t.name} className={`w-full h-9 flex items-center justify-center pr-[3px] ${t.name === 'Style' ? 'bg-[#cecece]' : ''}`}>
            <svg viewBox="0 0 28 28" className="w-7 h-7">{t.art}</svg>
          </button>
        ))}
      </nav>
      <div className="w-[5px] shrink-0 bg-[repeating-conic-gradient(#fff_0_25%,#c4c4c4_0_50%)] bg-[length:2px_2px]" />

      <div className="flex-1 min-w-0 flex flex-col pl-[1px]">
        <div className="flex-1 flex">
          <div className="w-[340px] shrink-0 flex flex-col pt-1">
            <Combo
              label="Renderer"
              value="Single Symbol"
              options={['Categorized', 'Graduated']}
              pad="pl-6"
              className="w-[143px] ml-[1px]"
              icon={
                <svg viewBox="-2 0 14 16" className="w-[14px] h-4">
                  <path d="M.5 1h6v2h4v4h-4v2h4.500v5.500H6V13H2V9h3V6H.5z" fill="#2ba35d" stroke="#187a41" />
                </svg>
              }
            />
            <div className="mt-[7px] h-[102px] flex items-center justify-center border border-[#8c8c8c] border-b-white border-r-white">
              <div className="w-[61px] h-[61px] border border-black" />
            </div>
            <SymbolTree />
            <div className="flex items-center gap-2 px-[1px] mt-[7px]">
              {TOOLS.map(t => (
                <button
                  key={t.name}
                  aria-label={t.name}
                  disabled={t.off}
                  className={t.off ? 'w-[42px] h-[30px] rounded-[3px] border border-[#a4a4a4] bg-[#c4c4c4] flex items-center justify-center' : `${BTN} w-[42px] h-[30px] flex items-center justify-center`}
                >
                  <svg viewBox="0 0 24 24" className="w-6 h-6">{t.art}</svg>
                </button>
              ))}
              <button className={`${BTN} w-12 h-[25px] ml-auto`}>Save</button>
            </div>
          </div>
          <SymbolForm />
        </div>

        <LayerRendering />

        <div className="mt-[19px] pl-[1px] pr-1 grid grid-cols-4 gap-2">
          <button className={`${BTN} h-[25px]`}>Load Style ...</button>
          <button className={`${BTN} h-[25px]`}>Save As Default</button>
          <button className={`${BTN} h-[25px]`}>Restore Default Style</button>
          <button className={`${BTN} h-[25px] flex items-center pr-[5px]`}>
            <span className="flex-1 pr-1">Save Style</span>
            <Down />
          </button>
        </div>
        <div className="mt-2 mb-[5px] pl-[1px] pr-1 flex gap-2">
          <button className={`${BTN} w-[83px] h-[25px] mr-auto`}>Help</button>
          <button className={`${BTN} w-[83px] h-[25px]`}>Apply</button>
          <button className={`${BTN} w-[83px] h-[25px]`}><u>C</u>ancel</button>
          <button className="w-[83px] h-[25px] rounded-[3px] border border-[#56779c] bg-linear-to-b from-[#73a7e0] to-[#5f97d8] text-[#2e3c4c]"><u>O</u>K</button>
        </div>
      </div>
    </div>
  </div>
);

const App: React.FC = () => (
  <div className="relative min-h-screen flex overflow-hidden bg-white font-['Noto_Sans','Open_Sans',sans-serif] text-[13px] leading-4">
    <MainWindow />
    <BackWindow />
    <Dialog />
  </div>
);

export default App;
